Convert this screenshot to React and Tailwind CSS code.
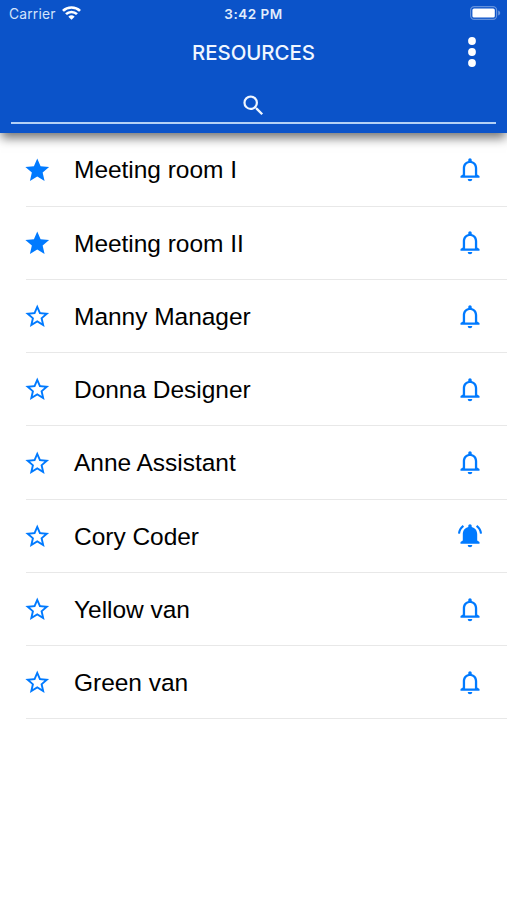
import React, { useState } from 'react';
import { MdStar, MdStarBorder, MdSearch } from 'react-icons/md';

const initialResources = [
  { id: 1, name: 'Meeting room I', starred: true, notify: false },
  { id: 2, name: 'Meeting room II', starred: true, notify: false },
  { id: 3, name: 'Manny Manager', starred: false, notify: false },
  { id: 4, name: 'Donna Designer', starred: false, notify: false },
  { id: 5, name: 'Anne Assistant', starred: false, notify: false },
  { id: 6, name: 'Cory Coder', starred: false, notify: true },
  { id: 7, name: 'Yellow van', starred: false, notify: false },
  { id: 8, name: 'Green van', starred: false, notify: false },
];

const bellBody = 'M12 .3c1 0 1.7.7 1.7 1.7v1c3.4.8 5.5 3.6 5.5 7.2v6.3l2.3 1.5v1.8h-19v-1.8l2.3-1.5v-6.3c0-3.6 2.1-6.4 5.5-7.2v-1c0-1 .7-1.7 1.7-1.7z';
const bellClapper = 'M9.7 21h4.6a2.3 2.3 0 0 1-4.6 0z';

const Icons = {
  Wifi: () => (
    <svg className="w-[19px] h-[14px]" viewBox="0 0 18 14" preserveAspectRatio="none" fill="none" stroke="currentColor" strokeWidth="2.5">
      <path d="M0.9 4.9a11.4 11.4 0 0 1 16.2 0" />
      <path d="M3.8 8.2a7.3 7.3 0 0 1 10.4 0" />
      <path d="M9 13.8 6 10.7a4.3 4.3 0 0 1 6 0z" fill="currentColor" stroke="none" />
    </svg>
  ),
  Battery: () => (
    <svg className="w-[31px] h-[14px]" viewBox="0 0 31 14" fill="none">
      <rect x="0.6" y="0.6" width="26" height="12.8" rx="3.6" stroke="#fff" strokeOpacity="0.36" strokeWidth="1.2" />
      <rect x="2.4" y="2.4" width="22.4" height="9.2" rx="1.6" fill="#fff" />
      <path d="M28.2 4.6c1.3.5 2 1.4 2 2.4s-.7 1.9-2 2.4z" fill="#fff" fillOpacity="0.4" />
    </svg>
  ),
  More: () => (
    <svg className="w-2 h-[30px]" viewBox="0 0 8 30" fill="currentColor">
      <circle cx="4" cy="4" r="3.9" />
      <circle cx="4" cy="15" r="3.9" />
      <circle cx="4" cy="26" r="3.9" />
    </svg>
  ),
  Bell: () => (
    <svg className="w-6 h-6" viewBox="0 0 24 24" fill="currentColor">
      <path fillRule="evenodd" d={`${bellBody}M12 4.9c-2.9 0-4.9 2.2-4.9 5.3v7.2h9.8v-7.2c0-3.1-2-5.3-4.9-5.3z`} />
      <path d={bellClapper} />
    </svg>
  ),
  BellActive: () => (
    <svg className="w-6 h-6 overflow-visible" viewBox="0 0 24 24" fill="currentColor">
      <path d={bellBody} />
      <path d={bellClapper} />
      <path d="M5.4 1.8C2.8 3.7 1.3 6.4 1 9.6M18.6 1.8c2.6 1.9 4.1 4.6 4.4 7.8" fill="none" stroke="currentColor" strokeWidth="2.1" />
    </svg>
  ),
};

const StatusBar = () => (
  <div className="grid grid-cols-[1fr_auto_1fr] items-center h-[27px] pl-[9px] pr-[6px] text-[13.5px] leading-[27px]">
    <div className="flex items-center gap-[6px]">
      <span className="pt-px leading-[26px] text-[#d3e4fb] text-[13.8px] tracking-[0.2px]">Carrier</span>
      <span className="-mt-px">
        <Icons.Wifi />
      </span>
    </div>
    <span className="-ml-[3px] pt-px leading-[26px] text-center font-semibold tracking-[0.5px] text-[#e2edfc] whitespace-nowrap">3:42 PM</span>
    <div className="flex justify-end -mt-px">
      <Icons.Battery />
    </div>
  </div>
);

const Header = () => (
  <header className="relative z-10 flex flex-col h-[133px] bg-[#0b53c9] text-white font-[Inter,sans-serif] shadow-[0_6px_10px_-1px_rgba(0,0,0,0.55)]">
    <StatusBar />
    <div className="grid grid-cols-[1fr_auto_1fr] items-center h-[50px] px-[31px]">
      <h1 className="col-start-2 pt-[2px] text-[20.4px] font-medium text-[#f0f6ff]">RESOURCES</h1>
      <button className="justify-self-end" aria-label="Menu">
        <Icons.More />
      </button>
    </div>
    <button className="flex items-end justify-center ml-[11px] mr-[11px] h-[47px] pb-[3px] border-b-2 border-[#b4d1f6] text-[#f0f6ff]" aria-label="Search">
      <MdSearch className="w-[27px] h-[27px]" />
    </button>
  </header>
);

const ResourceRow = ({ resource, onStar, onNotify }) => {
  const Star = resource.starred ? MdStar : MdStarBorder;
  const Bell = resource.notify ? Icons.BellActive : Icons.Bell;

  return (
    <li className="flex items-center h-[73.25px] ml-[26px] pr-[25px] border-b border-[#e8e8e8]">
      <button className="-ml-[3px] pt-px text-[#007aff]" onClick={onStar} aria-label="Favourite">
        <Star className="w-[28.5px] h-[28.5px]" />
      </button>
      <span className="flex-1 ml-[22.5px] pt-[2px] text-[24.5px] leading-8 tracking-[-0.03px] text-black">{resource.name}</span>
      <button className="pt-[1.5px] text-[#007aff]" onClick={onNotify} aria-label="Notifications">
        <Bell />
      </button>
    </li>
  );
};

export default function App() {
  const [resources, setResources] = useState(initialResources);

  const toggle = (id, key) => {
    setResources(resources.map((r) => (r.id === id ? { ...r, [key]: !r[key] } : r)));
  };

  return (
    <div className="w-full min-h-screen overflow-hidden bg-white font-['Liberation_Sans',sans-serif]">
      <Header />
      <ul className="pt-[0.3px]">
        {resources.map((resource) => (
          <ResourceRow
            key={resource.id}
            resource={resource}
            onStar={() => toggle(resource.id, 'starred')}
            onNotify={() => toggle(resource.id, 'notify')}
          />
        ))}
      </ul>
    </div>
  );
}
